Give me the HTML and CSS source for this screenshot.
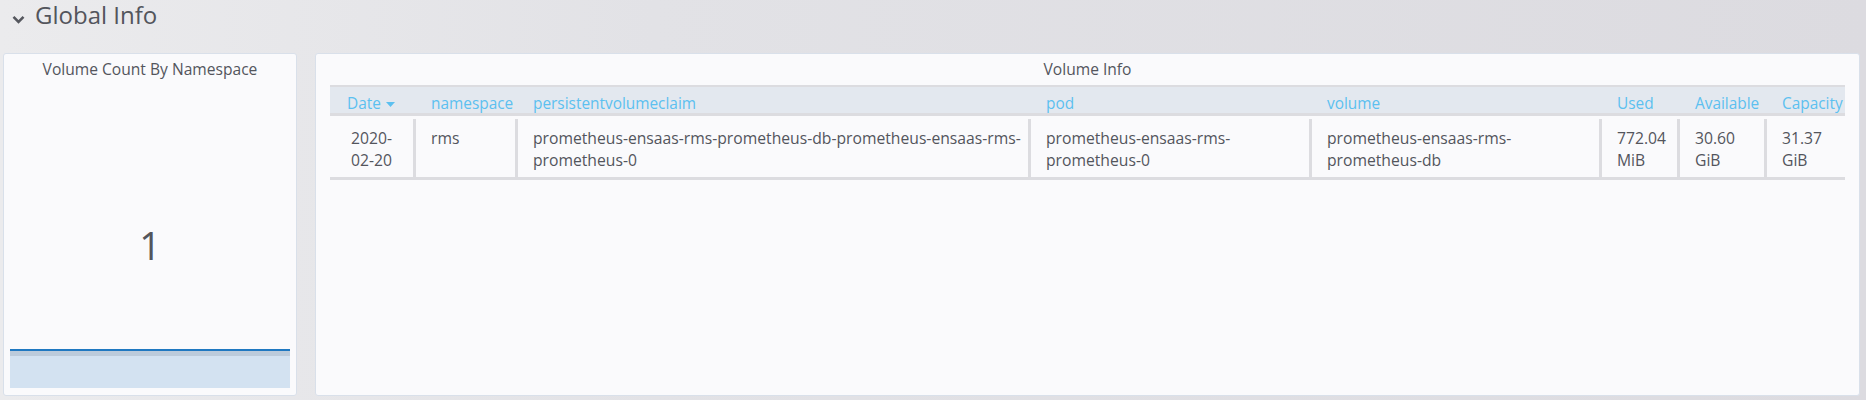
FILE: index.html
```html
<!DOCTYPE html>
<html>
<head>
<meta charset="utf-8">
<link rel="stylesheet" href="styles.css">
</head>
<body>
<div class="row-title">
  <svg class="chevron" width="13" height="9" viewBox="0 0 13 9"><path d="M1.5 1.8 L6.5 6.8 L11.5 1.8" fill="none" stroke="#55575e" stroke-width="2.6"/></svg>
  <span class="row-name">Global Info</span>
</div>
<div class="panels">
  <div class="panel panel-stat">
    <div class="panel-title">Volume Count By Namespace</div>
    <div class="stat-value">1</div>
    <div class="sparkline"></div>
  </div>
  <div class="panel panel-table">
    <div class="panel-title">Volume Info</div>
    <div class="table">
      <div class="thead">
        <div class="th th-date">Date <svg class="caret" width="9" height="5" viewBox="0 0 9 5"><path d="M0 0 L9 0 L4.5 5 Z" fill="#5cc0f0"/></svg></div>
        <div class="th">namespace</div>
        <div class="th">persistentvolumeclaim</div>
        <div class="th">pod</div>
        <div class="th">volume</div>
        <div class="th">Used</div>
        <div class="th">Available</div>
        <div class="th">Capacity</div>
      </div>
      <div class="trow">
        <div class="td td-date">2020-<wbr>02-20</div>
        <div class="td">rms</div>
        <div class="td">prometheus-ensaas-rms-prometheus-db-prometheus-ensaas-rms-prometheus-0</div>
        <div class="td">prometheus-ensaas-rms-prometheus-0</div>
        <div class="td">prometheus-ensaas-rms-prometheus-db</div>
        <div class="td">772.04 MiB</div>
        <div class="td">30.60 GiB</div>
        <div class="td">31.37 GiB</div>
      </div>
    </div>
  </div>
</div>
</body>
</html>
```
FILE: styles.css
```css
html, body {
  margin: 0;
  padding: 0;
}
body {
  width: 1866px;
  height: 400px;
  overflow: hidden;
  font-family: "Open Sans", "Noto Sans", sans-serif;
  color: #53555c;
  background: linear-gradient(90deg, #ebebed 0%, #e2e2e6 35%, #dcdbe0 100%);
}
.row-title {
  display: flex;
  align-items: flex-start;
  height: 30px;
  padding-left: 12px;
}
.chevron {
  margin-top: 15px;
  margin-right: 10px;
  flex: none;
}
.row-name {
  font-size: 24px;
  line-height: 30px;
  color: #53555c;
}
.panels {
  display: flex;
  gap: 18px;
  margin-top: 23px;
  padding-left: 3px;
}
.panel {
  box-sizing: border-box;
  height: 343px;
  background: #fafafc;
  border: 1px solid #d9e0ea;
  border-radius: 3px;
  display: flex;
  flex-direction: column;
}
.panel-stat {
  width: 294px;
}
.panel-table {
  width: 1545px;
}
.panel-title {
  padding-top: 5px;
  font-size: 15.6px;
  line-height: 20px;
  text-align: center;
  color: #53555c;
}
.stat-value {
  margin-top: 147px;
  font-size: 38px;
  line-height: 38px;
  text-align: center;
  color: #53555c;
}
.sparkline {
  margin: auto 6px 7px 6px;
  height: 37px;
  border-top: 2px solid #1f78c1;
  background: linear-gradient(#bccbdb 0, #bccbdb 5px, #d3e2f1 5px);
}
.table {
  margin: 6px 14px 0 14px;
  width: 1515px;
}
.thead, .trow {
  display: grid;
  grid-template-columns: 83px 102px 513px 281px 290px 78px 87px 81px;
}
.thead {
  border-top: 2px solid #dcdce0;
  border-bottom: 3px solid #dcdce0;
  background: #e3e8ef;
  height: 26px;
}
.th {
  padding: 7px 0 0 18px;
  font-size: 15.4px;
  line-height: 19px;
  color: #5cc0f0;
  white-space: nowrap;
}
.th-date {
  padding-left: 17px;
  display: flex;
  align-items: center;
  gap: 5px;
  height: 19px;
}
.caret {
  margin-top: 1px;
}
.trow {
  padding-top: 3px;
  border-bottom: 3px solid #dcdce0;
}
.td {
  padding: 8px 4px 6px 15px;
  border-left: 3px solid #dcdce0;
  font-size: 15.7px;
  line-height: 22px;
  color: #53555c;
}
.td-date {
  border-left: none;
  padding: 8px 18px 6px 18px;
  text-align: center;
}
```
